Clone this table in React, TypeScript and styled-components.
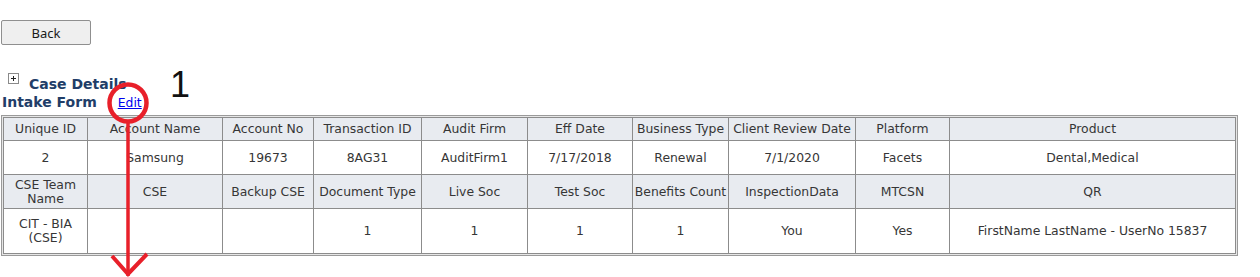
import React from "react";
import styled, { createGlobalStyle } from "styled-components";

const GlobalStyle = createGlobalStyle`
  html, body {
    margin: 0;
    padding: 0;
    background: #ffffff;
  }
  body {
    font-family: "DejaVu Sans", Verdana, sans-serif;
    font-size: 12px;
    color: #333333;
  }
`;

const Page = styled.div`
  position: relative;
  width: 1260px;
  height: 277px;
  overflow: hidden;
  padding: 20px 0 0 1px;
  box-sizing: border-box;
`;

const BackButton = styled.button`
  display: block;
  width: 90px;
  height: 25px;
  padding: 0;
  background: #efefef;
  border: 1px solid #8f8f8f;
  border-radius: 2px;
  font-family: "Noto Sans", "Open Sans", sans-serif;
  font-size: 13px;
  color: #1a1a1a;
`;

const Header = styled.div`
  margin-top: 28px;
  display: flex;
  flex-direction: column;
`;

const CaseRow = styled.div`
  display: flex;
  align-items: flex-start;
  height: 21px;
  padding-left: 7px;
`;

const PlusBox = styled.span`
  width: 9px;
  height: 9px;
  border: 1px solid #8a8a8a;
  background: #ffffff;
  position: relative;
  &::before,
  &::after {
    content: "";
    position: absolute;
    background: #222;
  }
  &::before {
    left: 2px;
    top: 4px;
    width: 5px;
    height: 1px;
  }
  &::after {
    left: 4px;
    top: 2px;
    width: 1px;
    height: 5px;
  }
`;

const Title = styled.span<{ $indent?: number; $top?: number }>`
  font-family: "DejaVu Sans", Verdana, sans-serif;
  font-weight: bold;
  font-size: 14px;
  line-height: 17px;
  color: #213d68;
  margin-left: ${(p) => p.$indent ?? 0}px;
  padding-top: ${(p) => p.$top ?? 0}px;
`;

const IntakeRow = styled.div`
  display: flex;
  align-items: baseline;
  height: 21px;
  padding-left: 1px;
`;

const EditLink = styled.a`
  margin-left: 21px;
  color: #0000ee;
  text-decoration: underline;
  font-size: 12.4px;
`;

const Frame = styled.div`
  width: 1237px;
  box-sizing: border-box;
  border: 1px solid #9a9a9a;
  padding: 1px;
  background: #e6e6e6;
`;

const Grid = styled.table`
  width: 100%;
  border-collapse: collapse;
  table-layout: fixed;
  background: #ffffff;
`;

const Row = styled.tr<{ $h: number }>`
  height: ${(p) => p.$h}px;
`;

const Cell = styled.td<{ $head?: boolean }>`
  border: 1px solid #8c8c8c;
  padding: 0 1px;
  text-align: center;
  vertical-align: middle;
  line-height: 14px;
  font-size: 12.4px;
  color: #363636;
  background: ${(p) => (p.$head ? "#e8ebf0" : "#ffffff")};
  white-space: normal;
`;

const Overlay = styled.svg`
  position: absolute;
  left: 0;
  top: 0;
  pointer-events: none;
`;

const Marker = styled.span`
  position: absolute;
  left: 170px;
  top: 65px;
  font-family: "Liberation Sans", Arial, sans-serif;
  font-size: 36px;
  line-height: 40px;
  color: #111111;
`;

const widths = [84, 135, 91, 108, 106, 105, 96, 127, 94, 286];

const rows: { head: boolean; h: number; cells: string[] }[] = [
  {
    head: true,
    h: 23,
    cells: [
      "Unique ID",
      "Account Name",
      "Account No",
      "Transaction ID",
      "Audit Firm",
      "Eff Date",
      "Business Type",
      "Client Review Date",
      "Platform",
      "Product",
    ],
  },
  {
    head: false,
    h: 34,
    cells: [
      "2",
      "Samsung",
      "19673",
      "8AG31",
      "AuditFirm1",
      "7/17/2018",
      "Renewal",
      "7/1/2020",
      "Facets",
      "Dental,Medical",
    ],
  },
  {
    head: true,
    h: 34,
    cells: [
      "CSE Team Name",
      "CSE",
      "Backup CSE",
      "Document Type",
      "Live Soc",
      "Test Soc",
      "Benefits Count",
      "InspectionData",
      "MTCSN",
      "QR",
    ],
  },
  {
    head: false,
    h: 45,
    cells: [
      "CIT - BIA (CSE)",
      "",
      "",
      "1",
      "1",
      "1",
      "1",
      "You",
      "Yes",
      "FirstName LastName - UserNo 15837",
    ],
  },
];

export default function App() {
  return (
    <>
      <GlobalStyle />
      <Page>
        <BackButton type="button">Back</BackButton>
        <Header>
          <CaseRow>
            <PlusBox />
            <Title $indent={10} $top={3}>
              Case Details
            </Title>
          </CaseRow>
          <IntakeRow>
            <Title>Intake Form</Title>
            <EditLink href="#">Edit</EditLink>
          </IntakeRow>
        </Header>
        <Frame>
          <Grid>
            <colgroup>
              {widths.map((w, i) => (
                <col key={i} style={{ width: w }} />
              ))}
            </colgroup>
            <tbody>
              {rows.map((r, ri) => (
                <Row key={ri} $h={r.h}>
                  {r.cells.map((c, ci) => (
                    <Cell key={ci} $head={r.head}>
                      {c}
                    </Cell>
                  ))}
                </Row>
              ))}
            </tbody>
          </Grid>
        </Frame>
        <Marker>1</Marker>
        <Overlay width="1260" height="277" viewBox="0 0 1260 277">
          <circle cx="128" cy="103" r="18.5" fill="none" stroke="#e8202a" strokeWidth="4.5" />
          <line x1="128" y1="122" x2="128" y2="276" stroke="#e8202a" strokeWidth="3.5" />
          <polyline
            points="112,256 128,274 147,254"
            fill="none"
            stroke="#e8202a"
            strokeWidth="4"
          />
        </Overlay>
      </Page>
    </>
  );
}
